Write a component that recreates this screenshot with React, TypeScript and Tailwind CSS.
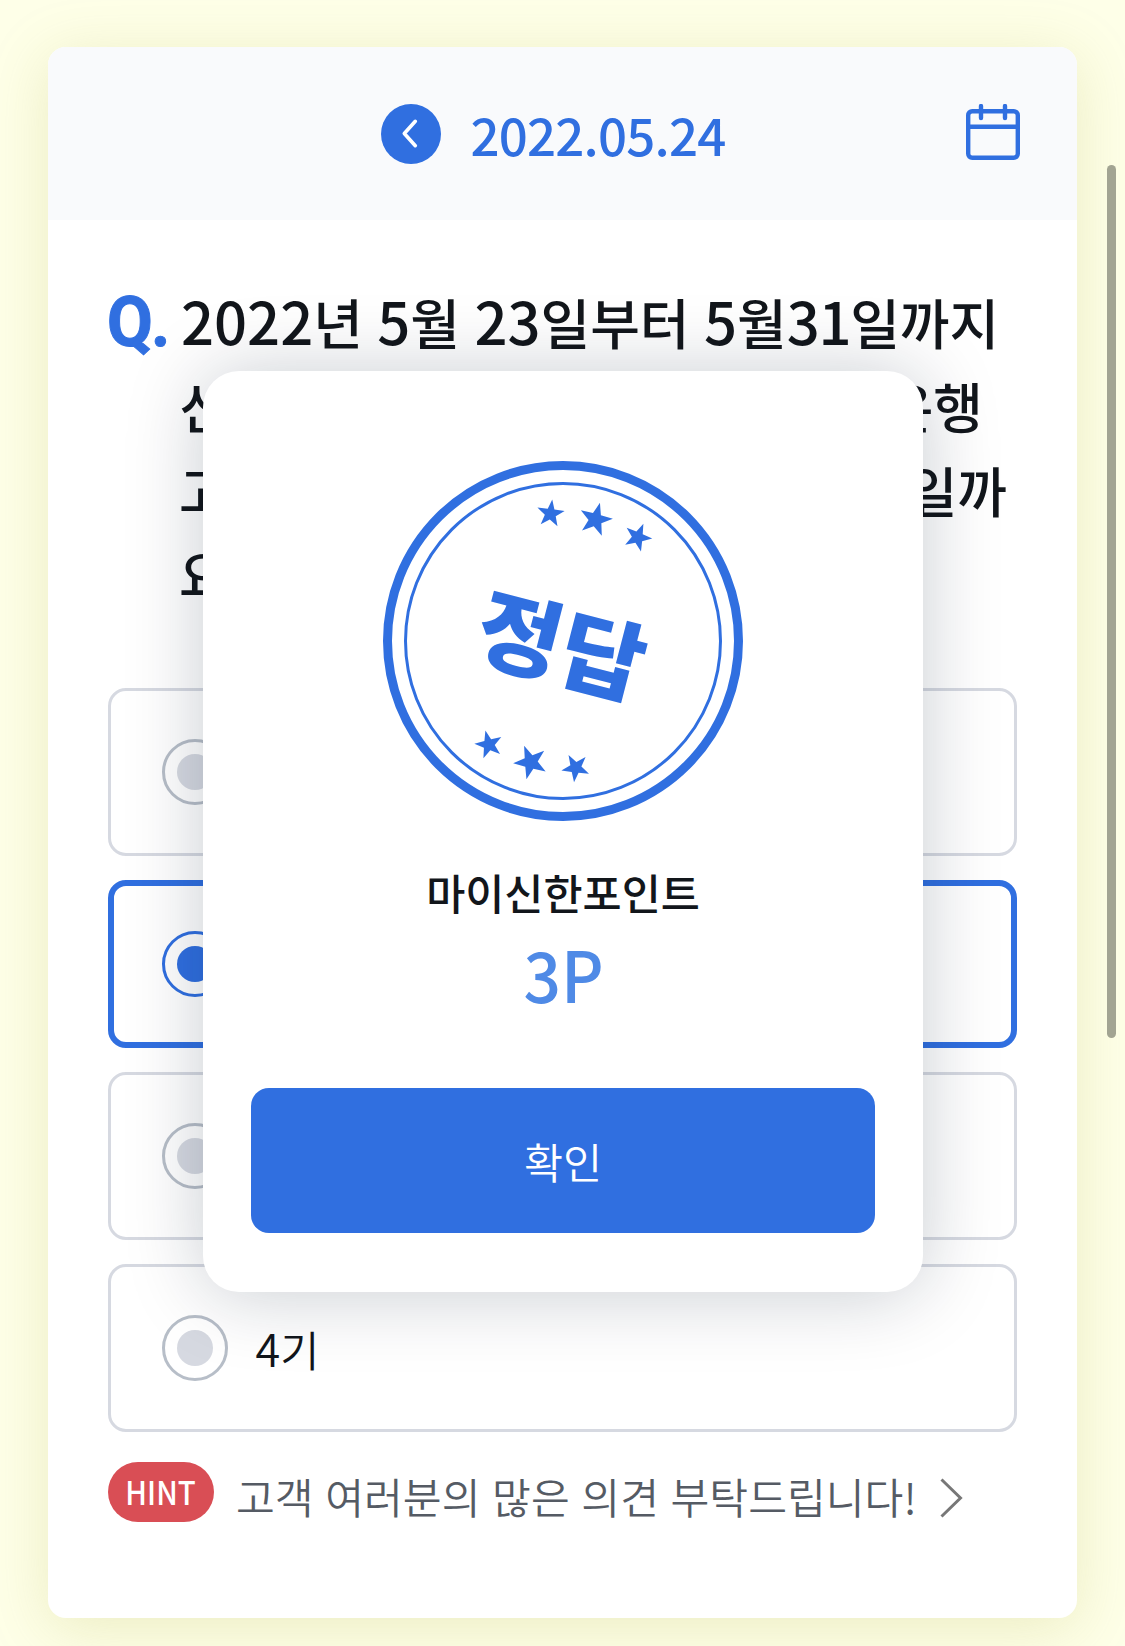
import React from "react";

const STARS = [
  { x: 167.5, y: 52.7, r: 14.4, a: 7 },
  { x: 212.5, y: 58.6, r: 17.4, a: 14.8 },
  { x: 254.7, y: 76.3, r: 14.6, a: 23 },
  { x: 105.9, y: 283.7, r: 14.6, a: -13.9 },
  { x: 147.7, y: 301.1, r: 17.6, a: -22 },
  { x: 192.7, y: 306.7, r: 14.6, a: -29.4 },
];

function starPoints(x: number, y: number, r: number, a: number) {
  return Array.from({ length: 10 }, (_, i) => {
    const radius = i % 2 === 0 ? r : r * 0.4;
    const t = ((a - 90 + i * 36) * Math.PI) / 180;
    return `${(x + radius * Math.cos(t)).toFixed(2)},${(y + radius * Math.sin(t)).toFixed(2)}`;
  }).join(" ");
}

function Num({ children }: { children: React.ReactNode }) {
  return <span className="text-[58px] leading-none">{children}</span>;
}

function Header() {
  return (
    <header className="relative flex h-[173px] items-start bg-[#f9fafc] pt-[57px] pl-[333px] text-[#306fe0]">
      <svg className="size-[60px]" viewBox="0 0 60 60" fill="none">
        <circle cx="30" cy="30" r="30" fill="#306fe0" />
        <path d="M34.3 17.3 23.3 29.5 34.3 41.7" stroke="#fff" strokeWidth="3.6" strokeLinecap="round" strokeLinejoin="round" />
      </svg>
      <span className="ml-[29.5px] h-[60px] text-[51px] leading-[60px] font-medium tracking-[-0.8px]">2022.05.24</span>
      <svg className="ml-auto mr-[57px] h-[57px] w-[54px]" viewBox="0 0 54 57" fill="none" stroke="#306fe0" strokeWidth="4.4">
        <rect x="2.2" y="7.2" width="49.6" height="46.6" rx="4" />
        <path d="M2 22.8h50" />
        <path d="M15 2v12M39 2v12" strokeLinecap="round" />
      </svg>
    </header>
  );
}

function Option({ label, selected }: { label: string; selected?: boolean }) {
  return (
    <div
      className={
        selected
          ? "flex h-[168px] items-center rounded-[18px] border-[6px] border-[#306fe0] pl-12"
          : "flex h-[168px] items-center rounded-[18px] border-[3px] border-[#d6d9e1] pl-[51px]"
      }
    >
      <span
        className={
          selected
            ? "flex size-[66px] items-center justify-center rounded-full border-[3px] border-[#306fe0]"
            : "flex size-[66px] items-center justify-center rounded-full border-[3px] border-[#b7bec8]"
        }
      >
        <span className={selected ? "size-9 rounded-full bg-[#306fe0]" : "size-9 rounded-full bg-[#d6d9e1]"} />
      </span>
      <span className="ml-[27.5px] pt-px text-[42.5px] leading-[60px] font-[350]">
        <span className="text-[45px] leading-none">{label[0]}</span>
        {label.slice(1)}
      </span>
    </div>
  );
}

function Stamp() {
  return (
    <div className="relative mx-auto size-[360px]">
      <svg className="size-full" viewBox="0 0 360 360" fill="none" stroke="#306fe0">
        <circle cx="180" cy="180" r="175.5" strokeWidth="9" />
        <circle cx="180" cy="180" r="157.5" strokeWidth="3" />
        {STARS.map((s) => (
          <polygon key={s.x} points={starPoints(s.x, s.y, s.r, s.a)} fill="#306fe0" stroke="none" />
        ))}
      </svg>
      <span className="absolute inset-0 flex rotate-[14.5deg] items-center justify-center text-[#306fe0]">
        <span className="scale-x-[1.06] text-[87.5px] leading-none font-black">정답</span>
      </span>
    </div>
  );
}

function Modal() {
  return (
    <div className="absolute top-[371.4px] left-[203px] flex h-[921px] w-[720px] flex-col rounded-[36px] bg-white px-12 pt-[89.6px] text-center shadow-[0_2px_78px_rgba(10,24,45,0.22)]">
      <Stamp />
      <p className="mt-[41px] text-[42.5px] leading-[60px] font-medium">마이신한포인트</p>
      <p className="mt-[9px] pl-px text-[70px] leading-[84px] font-medium text-[#4f8ae6]">
        <span className="inline-block scale-x-[0.94]">3P</span>
      </p>
      <button className="mt-[73.2px] h-[144.5px] w-full rounded-[18px] bg-[#306fe0] text-[42.5px] font-[350] text-white">
        확인
      </button>
    </div>
  );
}

export default function App() {
  return (
    <div className="relative h-[1646px] w-[1125px] overflow-hidden bg-[#feffe8] pt-[47px] pl-12 font-['Noto_Sans_CJK_KR',sans-serif] text-[#12161b]">
      <main className="h-[1571px] w-[1029px] rounded-[18px] bg-white shadow-[0_10px_60px_rgba(170,170,60,0.22)]">
        <div className="overflow-hidden rounded-t-[18px]">
          <Header />
        </div>
        <section className="px-[60px] pt-[60px]">
          <div className="flex h-[408px]">
            <span className="w-[73px] font-[Roboto,sans-serif] text-[70px] leading-[84px] font-bold tracking-[-2px] whitespace-nowrap text-[#306fe0]">
              <span className="-ml-px inline-block origin-left scale-x-[0.95] [-webkit-text-stroke:1px_#306fe0]">Q.</span>
            </span>
            <div className="text-[54px] leading-[84px] font-medium whitespace-nowrap">
              <p className="h-[84px] [word-spacing:2.2px]">
                <Num>2022</Num>년 <Num>5</Num>월 <Num>23</Num>일부터 <Num>5</Num>월
                <span className="tracking-[-1.3px]"><Num>31</Num></span>일까지
              </p>
              <p className="-ml-0.5 flex h-[84px] w-[804px] justify-between"><span>신한</span><span>은행</span></p>
              <p className="-ml-0.5 flex h-[84px] w-[828px] justify-between"><span>고객</span><span>일까</span></p>
              <p className="-ml-0.5 h-[84px]">요</p>
            </div>
          </div>
          <div className="flex flex-col gap-6">
            <Option label="1기" />
            <Option label="2기" selected />
            <Option label="3기" />
            <Option label="4기" />
          </div>
          <div className="mt-[30px] flex h-[60px]">
            <span className="flex h-[60px] w-[106px] items-center justify-center rounded-full bg-[#d94e55] pb-0.5 text-[33px] leading-none font-medium text-white">
              <span className="scale-x-[0.89]">HINT</span>
            </span>
            <span className="ml-[22px] pt-[4px] text-[42.2px] leading-[60px] font-[350] whitespace-nowrap text-[#555b64] [word-spacing:2.2px]">
              고객 여러분의 많은 의견 부탁드립니다!
            </span>
            <svg className="mt-4 ml-[23.5px] h-10 w-6" viewBox="0 0 24 40" fill="none" stroke="#777" strokeWidth="3">
              <path d="M1.5 1.5 20.5 20 1.5 38.5" />
            </svg>
          </div>
        </section>
      </main>
      <Modal />
      <div className="absolute top-[165px] left-[1107px] h-[873px] w-[9px] rounded-full bg-[#a2a492]" />
    </div>
  );
}
